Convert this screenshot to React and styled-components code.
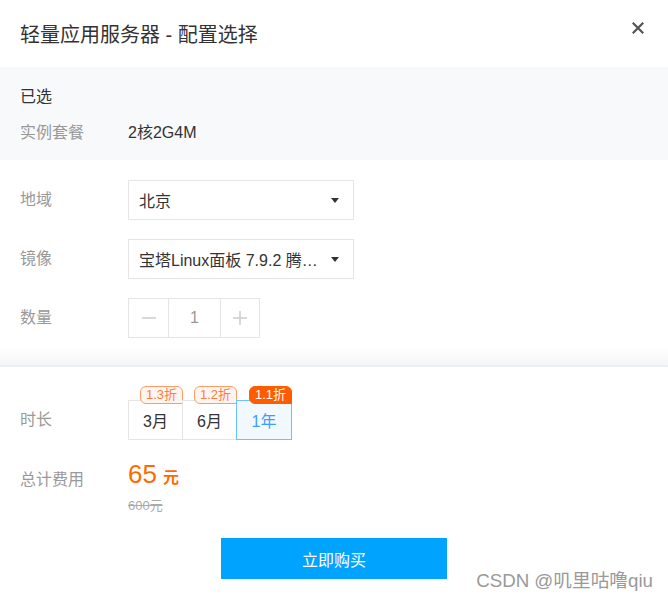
import React from "react";
import styled, { createGlobalStyle } from "styled-components";

const Global = createGlobalStyle`
  html, body { margin: 0; padding: 0; background: #fff; }
  body { font-family: "Liberation Sans", "Noto Sans CJK SC", sans-serif; color: #333; }
  * { box-sizing: border-box; }
`;

const Dialog = styled.div`
  position: relative;
  width: 668px;
  height: 600px;
  background: #fff;
  overflow: hidden;
`;

const Header = styled.div`
  display: flex;
  align-items: center;
  justify-content: space-between;
  padding: 20px 22px 17px 20px;
`;

const Title = styled.h1`
  margin: 0;
  font-size: 20px;
  line-height: 30px;
  font-weight: 400;
  color: #333;
`;

const Close = styled.button`
  border: 0;
  background: none;
  padding: 0;
  width: 16px;
  height: 16px;
  margin-top: -14px;
  display: flex;
  align-items: center;
  justify-content: center;
  cursor: pointer;
`;

const Selected = styled.div`
  background: #f8f9fb;
  padding: 20px 20px 17px;
  display: flex;
  flex-direction: column;
  gap: 16px;
`;

const SelectedTitle = styled.div`
  font-size: 16px;
  line-height: 20px;
  color: #333;
`;

const Row = styled.div`
  display: flex;
  align-items: ${(p) => p.$align || "center"};
`;

const Label = styled.div`
  width: 108px;
  flex: none;
  font-size: 16px;
  line-height: 20px;
  color: #999;
  margin-bottom: ${(p) => p.$mb || 0}px;
`;

const Value = styled.div`
  font-size: 16px;
  line-height: 20px;
  color: #333;
`;

const Form = styled.div`
  padding: 20px 20px 27px;
  display: flex;
  flex-direction: column;
  gap: 19px;
  background: linear-gradient(to bottom, #fff 0, #fff calc(100% - 20px), #f5f6f8 100%);
  border-bottom: 2px solid #eceef1;
`;

const Select = styled.div`
  width: 226px;
  height: 40px;
  border: 1px solid #e5e5e5;
  background: #fff;
  display: flex;
  align-items: center;
  padding: 0 14px 0 10px;
  gap: 10px;
  font-size: 16px;
  color: #333;
`;

const SelectText = styled.span`
  flex: 1;
  white-space: nowrap;
  overflow: hidden;
  text-overflow: ellipsis;
`;

const Caret = styled.span`
  width: 0;
  height: 0;
  border-left: 4.5px solid transparent;
  border-right: 4.5px solid transparent;
  border-top: 5px solid #333;
  flex: none;
`;

const Stepper = styled.div`
  display: flex;
  height: 40px;
  border: 1px solid #e5e5e5;
`;

const StepBtn = styled.div`
  width: ${(p) => p.$w}px;
  display: flex;
  align-items: center;
  justify-content: center;
  border-left: ${(p) => (p.$sep ? "1px solid #e5e5e5" : "0")};
  border-right: ${(p) => (p.$sepR ? "1px solid #e5e5e5" : "0")};
  font-size: 16px;
  color: #999;
`;

const Bottom = styled.div`
  padding: 19px 20px 0;
  display: flex;
  flex-direction: column;
`;

const Tabs = styled.div`
  display: flex;
  padding-top: 14px;
`;

const Tab = styled.div`
  position: relative;
  width: ${(p) => p.$w}px;
  height: 40px;
  display: flex;
  align-items: center;
  justify-content: center;
  font-size: 16px;
  color: ${(p) => (p.$active ? "#3d9eff" : "#333")};
  background: ${(p) => (p.$active ? "#f1f9ff" : "#fff")};
  border: 1px solid ${(p) => (p.$active ? "#6cc1ff" : "#e5e5e5")};
  margin-left: ${(p) => (p.$first ? "0" : "-1px")};
  z-index: ${(p) => (p.$active ? 1 : 0)};
`;

const Badge = styled.span`
  position: absolute;
  right: -1px;
  top: -15px;
  height: 18px;
  padding: 0 5px;
  font-size: 13px;
  line-height: 16px;
  border-radius: 6px 6px 0 6px;
  border: 1px solid ${(p) => (p.$active ? "#ff5c00" : "#ff9a6a")};
  background: ${(p) => (p.$active ? "#ff5c00" : "#fff5ef")};
  color: ${(p) => (p.$active ? "#fff" : "#ff7a45")};
  white-space: nowrap;
`;

const Total = styled.div`
  display: flex;
  align-items: flex-start;
  margin-top: 19px;
`;

const TotalLabel = styled(Label)`
  padding-top: 11px;
`;

const PriceBox = styled.div`
  display: flex;
  flex-direction: column;
`;

const Price = styled.div`
  color: #ff6a00;
  font-size: 26px;
  line-height: 30px;
  display: flex;
  align-items: baseline;
  gap: 6px;
`;

const Unit = styled.span`
  font-size: 16px;
  font-weight: 700;
`;

const OldPrice = styled.div`
  font-size: 13px;
  line-height: 16px;
  color: #aaa;
  text-decoration: line-through;
  margin-top: 5px;
`;

const Footer = styled.div`
  display: flex;
  justify-content: center;
  padding-top: 24px;
`;

const BuyButton = styled.button`
  width: 226px;
  height: 41px;
  border: 0;
  background: #00a4ff;
  color: #fff;
  font-family: inherit;
  font-size: 16px;
  cursor: pointer;
`;

const Watermark = styled.div`
  position: absolute;
  right: 15px;
  bottom: 8px;
  font-size: 18.7px;
  line-height: 22px;
  color: #999;
  text-shadow: 0 0 2px #fff;
  pointer-events: none;
`;

const periods = [
  { label: "3月", badge: "1.3折", w: 55 },
  { label: "6月", badge: "1.2折", w: 55 },
  { label: "1年", badge: "1.1折", w: 56, active: true },
];

export default function App() {
  return (
    <>
      <Global />
      <Dialog>
        <Header>
          <Title>轻量应用服务器 - 配置选择</Title>
          <Close aria-label="关闭">
            <svg width="12" height="12" viewBox="0 0 12 12">
              <path d="M1.5 1.5L10.5 10.5M10.5 1.5L1.5 10.5" stroke="#555" strokeWidth="2.2" strokeLinecap="square" />
            </svg>
          </Close>
        </Header>
        <Selected>
          <SelectedTitle>已选</SelectedTitle>
          <Row>
            <Label>实例套餐</Label>
            <Value>2核2G4M</Value>
          </Row>
        </Selected>
        <Form>
          <Row>
            <Label>地域</Label>
            <Select>
              <SelectText>北京</SelectText>
              <Caret />
            </Select>
          </Row>
          <Row>
            <Label>镜像</Label>
            <Select>
              <SelectText>宝塔Linux面板 7.9.2 腾讯云专享版</SelectText>
              <Caret />
            </Select>
          </Row>
          <Row>
            <Label>数量</Label>
            <Stepper>
              <StepBtn $w={39}>
                <svg width="14" height="14" viewBox="0 0 14 14">
                  <path d="M0 7H14" stroke="#ccc" strokeWidth="1.5" />
                </svg>
              </StepBtn>
              <StepBtn $w={53} $sep $sepR>1</StepBtn>
              <StepBtn $w={38}>
                <svg width="14" height="14" viewBox="0 0 14 14">
                  <path d="M0 7H14M7 0V14" stroke="#ccc" strokeWidth="1.5" />
                </svg>
              </StepBtn>
            </Stepper>
          </Row>
        </Form>
        <Bottom>
          <Row $align="flex-end">
            <Label $mb={10}>时长</Label>
            <Tabs>
              {periods.map((p, i) => (
                <Tab key={p.label} $w={p.w} $active={p.active} $first={i === 0}>
                  {p.label}
                  <Badge $active={p.active}>{p.badge}</Badge>
                </Tab>
              ))}
            </Tabs>
          </Row>
          <Total>
            <TotalLabel>总计费用</TotalLabel>
            <PriceBox>
              <Price>
                65<Unit>元</Unit>
              </Price>
              <OldPrice>600元</OldPrice>
            </PriceBox>
          </Total>
          <Footer>
            <BuyButton>立即购买</BuyButton>
          </Footer>
        </Bottom>
        <Watermark>CSDN @叽里咕噜qiu</Watermark>
      </Dialog>
    </>
  );
}
